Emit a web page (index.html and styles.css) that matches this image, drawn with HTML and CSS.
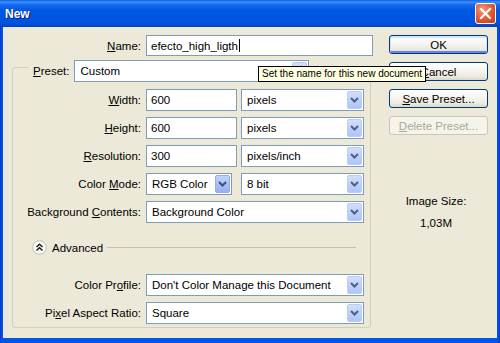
FILE: index.html
```html
<!DOCTYPE html>
<html>
<head>
<meta charset="utf-8">
<title>New</title>
<link rel="stylesheet" href="styles.css">
</head>
<body>
<div class="window">
    <div class="titlebar">
        <span class="title">New</span>
        <span class="close">
            <svg width="13" height="13" viewBox="0 0 13 13"><path d="M2 2 L11 11 M11 2 L2 11" stroke="#fff" stroke-width="2.2" stroke-linecap="square"/></svg>
        </span>
    </div>
    <div class="dialog">
        <div class="form">
            <div class="row name-row">
                <label class="lbl lbl-wide"><u>N</u>ame:</label>
                <div class="input name-input">efecto_high_ligth<span class="caret"></span></div>
            </div>
            <div class="group">
                <div class="preset-row">
                    <label class="legend"><u>P</u>reset:</label>
                    <div class="select preset-select"><span class="value">Custom</span><span class="arrow"><svg width="9" height="6" viewBox="0 0 9 6"><path d="M1 1 L4.5 4.5 L8 1" fill="none" stroke="#4D6185" stroke-width="2"/></svg></span></div>
                </div>
                <div class="row row-first">
                    <label class="lbl"><u>W</u>idth:</label>
                    <div class="input num-input">600</div>
                    <div class="select unit-select"><span class="value">pixels</span><span class="arrow"><svg width="9" height="6" viewBox="0 0 9 6"><path d="M1 1 L4.5 4.5 L8 1" fill="none" stroke="#4D6185" stroke-width="2"/></svg></span></div>
                </div>
                <div class="row">
                    <label class="lbl"><u>H</u>eight:</label>
                    <div class="input num-input">600</div>
                    <div class="select unit-select"><span class="value">pixels</span><span class="arrow"><svg width="9" height="6" viewBox="0 0 9 6"><path d="M1 1 L4.5 4.5 L8 1" fill="none" stroke="#4D6185" stroke-width="2"/></svg></span></div>
                </div>
                <div class="row">
                    <label class="lbl"><u>R</u>esolution:</label>
                    <div class="input num-input">300</div>
                    <div class="select unit-select"><span class="value">pixels/inch</span><span class="arrow"><svg width="9" height="6" viewBox="0 0 9 6"><path d="M1 1 L4.5 4.5 L8 1" fill="none" stroke="#4D6185" stroke-width="2"/></svg></span></div>
                </div>
                <div class="row">
                    <label class="lbl">Color <u>M</u>ode:</label>
                    <div class="select mode-select"><span class="value">RGB Color</span><span class="arrow hot"><svg width="9" height="6" viewBox="0 0 9 6"><path d="M1 1 L4.5 4.5 L8 1" fill="none" stroke="#3B4F7A" stroke-width="2"/></svg></span></div>
                    <div class="select unit-select"><span class="value">8 bit</span><span class="arrow"><svg width="9" height="6" viewBox="0 0 9 6"><path d="M1 1 L4.5 4.5 L8 1" fill="none" stroke="#4D6185" stroke-width="2"/></svg></span></div>
                </div>
                <div class="row">
                    <label class="lbl">Background <u>C</u>ontents:</label>
                    <div class="select full-select"><span class="value">Background Color</span><span class="arrow"><svg width="9" height="6" viewBox="0 0 9 6"><path d="M1 1 L4.5 4.5 L8 1" fill="none" stroke="#4D6185" stroke-width="2"/></svg></span></div>
                </div>
                <div class="advanced-row">
                    <svg class="adv-btn" width="15" height="15" viewBox="0 0 15 15">
                        <circle cx="7.5" cy="7.5" r="6.8" fill="#FAFAF7" stroke="#C4C1B4" stroke-width="1"/>
                        <path d="M4.5 7 L7.5 4.2 L10.5 7 M4.5 10.5 L7.5 7.7 L10.5 10.5" fill="none" stroke="#1E1E1E" stroke-width="1.5"/>
                    </svg>
                    <span class="adv-text">Advanced</span>
                    <span class="adv-line"></span>
                </div>
                <div class="row row-profile">
                    <label class="lbl">Color Pr<u>o</u>file:</label>
                    <div class="select full-select"><span class="value">Don't Color Manage this Document</span><span class="arrow"><svg width="9" height="6" viewBox="0 0 9 6"><path d="M1 1 L4.5 4.5 L8 1" fill="none" stroke="#4D6185" stroke-width="2"/></svg></span></div>
                </div>
                <div class="row">
                    <label class="lbl">Pi<u>x</u>el Aspect Ratio:</label>
                    <div class="select full-select"><span class="value">Square</span><span class="arrow"><svg width="9" height="6" viewBox="0 0 9 6"><path d="M1 1 L4.5 4.5 L8 1" fill="none" stroke="#4D6185" stroke-width="2"/></svg></span></div>
                </div>
            </div>
        </div>
        <div class="side">
            <div class="btn btn-default">OK</div>
            <div class="btn"><u>C</u>ancel</div>
            <div class="btn"><u>S</u>ave Preset...</div>
            <div class="btn btn-disabled"><u>D</u>elete Preset...</div>
            <div class="size">
                <div>Image Size:</div>
                <div class="size-value">1,03M</div>
            </div>
        </div>
    </div>
    <div class="tooltip">Set the name for this new document</div>
</div>
</body>
</html>
```

FILE: styles.css
```css
*{
    box-sizing: border-box;
}
body{
    margin: 0;
    background: #ECE9D8;
    font-family: "Liberation Sans", Arial, sans-serif;
    font-size: 11.5px;
    color: #000;
}
.window{
    position: relative;
    width: 500px;
    height: 343px;
    display: flex;
    flex-direction: column;
    background: linear-gradient(90deg, #0831D9, #0055E5 2px, #0055E5 498px, #0831D9);
}
.titlebar{
    height: 27px;
    display: flex;
    align-items: center;
    justify-content: space-between;
    padding: 0 4px 0 5px;
    background: linear-gradient(#0A5FE8 0px, #3D90F8 2px, #1668F0 5px, #0058E6 10px, #0055E3 60%, #0051DC 88%, #0042C4 100%);
}
.title{
    color: #fff;
    font-weight: bold;
    font-size: 12px;
    text-shadow: 1px 1px 0 #0A1A80;
}
.close{
    width: 21px;
    height: 21px;
    border: 1px solid #fff;
    border-radius: 3px;
    background: radial-gradient(circle at 35% 30%, #F09A7A, #E0562E 55%, #C53A14);
    display: flex;
    align-items: center;
    justify-content: center;
}
.dialog{
    flex: 1;
    display: flex;
    margin: 0 3px 5px 3px;
    background: #ECE9D8;
}
.form{
    width: 370px;
    display: flex;
    flex-direction: column;
}
.row{
    display: flex;
    align-items: center;
    height: 22px;
    margin-top: 6px;
}
.name-row{
    margin-top: 8px;
    height: 21px;
}
.row-first{
    margin-top: 7px;
}
.row-profile{
    margin-top: 19px;
}
.lbl{
    width: 133px;
    padding-right: 5px;
    text-align: right;
    white-space: nowrap;
}
.lbl-wide{
    width: 143px;
}
.input{
    height: 22px;
    border: 1px solid #7F9DB9;
    background: #fff;
    padding-left: 4px;
    display: flex;
    align-items: center;
    white-space: nowrap;
}
.name-input{
    width: 227px;
    height: 21px;
}
.caret{
    width: 1px;
    height: 13px;
    background: #000;
    margin-left: 1px;
}
.num-input{
    width: 91px;
    margin-right: 4px;
}
.group{
    margin: 11px 0 0 9px;
    width: 359px;
    height: 261px;
    border: 1px solid #D0D0BF;
    border-radius: 3px;
    display: flex;
    flex-direction: column;
}
.preset-row{
    display: flex;
    align-items: center;
    height: 22px;
    margin-top: -8px;
    padding-left: 16px;
}
.legend{
    background: #ECE9D8;
    padding: 0 4px;
}
.select{
    height: 22px;
    border: 1px solid #7F9DB9;
    background: #fff;
    display: flex;
    align-items: center;
    white-space: nowrap;
}
.select .value{
    flex: 1;
    padding-left: 5px;
    overflow: hidden;
}
.arrow{
    width: 15px;
    height: 18px;
    margin: 1px;
    border: 1px solid #B9CCF6;
    border-radius: 2px;
    background: linear-gradient(#D2DEFD, #BCCEFA 60%, #B0C5F7);
    display: flex;
    align-items: center;
    justify-content: center;
}
.arrow.hot{
    border-color: #93AEEA;
    background: linear-gradient(#C2D4FC, #A7BEF2 60%, #98B2EE);
}
.preset-select{
    width: 235px;
    margin-left: 1px;
}
.unit-select{
    width: 123px;
}
.mode-select{
    width: 86px;
    margin-right: 9px;
}
.full-select{
    width: 218px;
}
.advanced-row{
    display: flex;
    align-items: center;
    height: 15px;
    margin-top: 17px;
    padding: 0 14px 0 19px;
}
.adv-text{
    margin-left: 5px;
    margin-right: 4px;
}
.adv-line{
    flex: 1;
    height: 1px;
    background: #C5C2B2;
}
.side{
    flex: 1;
    padding: 8px 0 0 16px;
    display: flex;
    flex-direction: column;
}
.btn{
    width: 99px;
    height: 19px;
    margin-bottom: 8px;
    border: 1px solid #003C74;
    border-radius: 3px;
    background: linear-gradient(#FFFFFF, #F6F5F0 45%, #EBE9E0 80%, #D9D4C8);
    display: flex;
    align-items: center;
    justify-content: center;
    white-space: nowrap;
}
.btn-default{
    box-shadow: inset 0 1px 0 1px #CEE7FF, inset 0 -1px 0 1px #6982EE;
}
.btn-disabled{
    border-color: #C9C7BA;
    background: #F5F4EA;
    color: #ACA899;
}
.size{
    width: 94px;
    margin-top: 52px;
    text-align: center;
    line-height: 13px;
}
.size-value{
    margin-top: 9px;
}
.tooltip{
    position: absolute;
    left: 258px;
    top: 66px;
    padding: 1px 3px;
    border: 1px solid #000;
    background: #FFFFE1;
    font-size: 10px;
    line-height: 12px;
    white-space: nowrap;
}
```
